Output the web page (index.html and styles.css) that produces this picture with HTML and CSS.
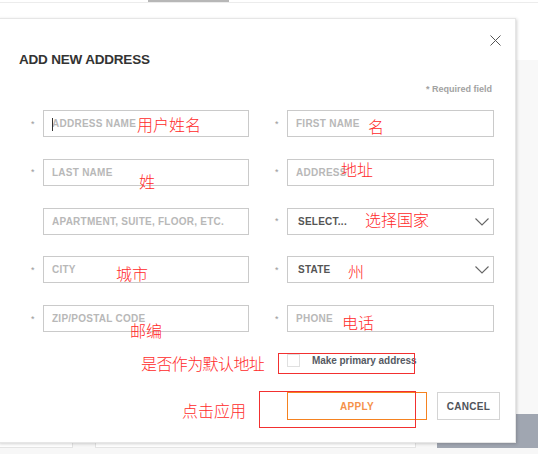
FILE: index.html
```html
<!DOCTYPE html>
<html lang="zh-CN">
<head>
<meta charset="utf-8">
<title>Add new address</title>
<link rel="stylesheet" href="styles.css">
</head>
<body>
<div class="page">
  <div class="tabs"><span class="tab-active"></span></div>
  <div class="spacer"></div>
  <div class="content"><div class="content-main"></div><div class="content-side"></div></div>
  <div class="grayrow"><div class="grayblock"></div></div>
  <div class="footer">
    <div class="fbox fbox-1"></div>
    <div class="fbox fbox-2"></div>
  </div>
</div>

<div class="modal">
  <button class="close" aria-label="close">
    <svg width="11" height="11" viewBox="0 0 11 11"><path d="M0.5 0.5 L10.5 10.5 M10.5 0.5 L0.5 10.5" stroke="#555" stroke-width="1" fill="none"/></svg>
  </button>
  <h2 class="title">ADD NEW ADDRESS</h2>
  <div class="required">* Required field</div>

  <div class="grid">
    <span class="star">*</span>
    <div class="field"><span class="caret"></span>ADDRESS NAME</div>
    <span class="star star-r">*</span>
    <div class="field">FIRST NAME</div>

    <span class="star">*</span>
    <div class="field">LAST NAME</div>
    <span class="star star-r">*</span>
    <div class="field">ADDRESS</div>

    <span class="star"></span>
    <div class="field">APARTMENT, SUITE, FLOOR, ETC.</div>
    <span class="star star-r">*</span>
    <div class="field select">SELECT...<svg class="chev" width="14" height="8" viewBox="0 0 14 8"><path d="M0.5 0.5 L7 7 L13.5 0.5" stroke="#666" stroke-width="1.1" fill="none"/></svg></div>

    <span class="star">*</span>
    <div class="field">CITY</div>
    <span class="star star-r">*</span>
    <div class="field select">STATE<svg class="chev" width="14" height="8" viewBox="0 0 14 8"><path d="M0.5 0.5 L7 7 L13.5 0.5" stroke="#666" stroke-width="1.1" fill="none"/></svg></div>

    <span class="star">*</span>
    <div class="field">ZIP/POSTAL CODE</div>
    <span class="star star-r">*</span>
    <div class="field">PHONE</div>
  </div>

  <div class="check-row">
    <span class="checkbox"></span>
    <span class="check-label">Make primary address</span>
  </div>

  <div class="btn-row">
    <button class="btn btn-apply">APPLY</button>
    <button class="btn btn-cancel">CANCEL</button>
  </div>

  <span class="note n1">用户姓名</span>
  <span class="note n2">名</span>
  <span class="note n3">姓</span>
  <span class="note n4">地址</span>
  <span class="note n5">选择国家</span>
  <span class="note n6">城市</span>
  <span class="note n7">州</span>
  <span class="note n8">邮编</span>
  <span class="note n9">电话</span>
  <span class="note n10">是否作为默认地址</span>
  <span class="note n11">点击应用</span>
  <span class="redbox rb1"></span>
  <span class="redbox rb2"></span>
</div>
</body>
</html>
```

FILE: styles.css
```css
* { box-sizing: border-box; }
html, body { margin: 0; padding: 0; }
body {
  width: 538px;
  height: 454px;
  overflow: hidden;
  position: relative;
  background: #fff;
  font-family: "Liberation Sans", Arial, sans-serif;
}

/* background page */
.page { display: flex; flex-direction: column; height: 454px; }
.tabs {
  height: 3px;
  border-bottom: 1px solid #ececec;
}
.tab-active {
  display: block;
  margin-left: 148px;
  width: 81px;
  height: 2px;
  background: #b7b7b7;
}
.spacer { height: 57px; }
.content { display: flex; height: 354px; }
.content-main { width: 516px; background: #fff; }
.content-side { flex: 1; background: #f8f8f8; }
.grayrow { height: 28px; display: flex; justify-content: flex-end; background: #f8f8f8; }
.grayblock { width: 101px; background: #a0a6b1; }
.footer {
  flex: 1;
  background: #f7f7f7;
  display: flex;
  align-items: flex-start;
  position: relative;
}
.fbox {
  height: 6px;
  background: #fff;
  border: 1px solid #e4e4e4;
  border-top: none;
}
.fbox-1 { width: 74px; margin-left: -1px; }
.fbox-2 { width: 321px; margin-left: 22px; }
.footer::after {
  content: "";
  position: absolute;
  right: 0;
  top: 0;
  width: 101px;
  height: 6px;
  background: #a0a6b1;
}

/* modal */
.modal {
  position: absolute;
  left: -2px;
  top: 18px;
  width: 518px;
  height: 425px;
  background: #fff;
  border: 1px solid #e6e6e6;
  box-shadow: 1px 1px 3px rgba(0,0,0,0.18);
  padding: 0 0 0 21px;
}
.close {
  position: absolute;
  right: 14px;
  top: 16px;
  padding: 0;
  border: none;
  background: none;
  width: 11px;
  height: 11px;
  line-height: 0;
}
.title {
  margin: 0;
  padding-top: 34px;
  font-size: 13.5px;
  font-weight: bold;
  color: #333;
  letter-spacing: -0.2px;
  line-height: 14px;
  margin-left: -1px;
}
.required {
  margin-top: 17px;
  margin-right: 23px;
  text-align: right;
  font-size: 9px;
  font-weight: bold;
  color: #a2a2a2;
  line-height: 10px;
}
.grid {
  margin-top: 16px;
  margin-left: 9px;
  display: grid;
  grid-template-columns: 14px 206px 38px 207px;
  grid-auto-rows: 27px;
  row-gap: 21.75px;
  align-items: center;
}
.star {
  font-size: 9px;
  color: #999;
  padding-left: 2px;
  line-height: 10px;
}
.star-r { padding-left: 26px; }
.field {
  height: 27px;
  border: 1px solid #cacaca;
  padding-left: 8px;
  display: flex;
  align-items: center;
  font-size: 10px;
  font-weight: bold;
  color: #b8b8b8;
  letter-spacing: 0.25px;
  position: relative;
}
.caret {
  position: absolute;
  left: 8px;
  top: 7px;
  width: 1px;
  height: 13px;
  background: #333;
}
.select { color: #555; padding-left: 10px; }
.chev { position: absolute; right: 4px; top: 9px; }

.check-row {
  margin-top: 22px;
  margin-left: 267px;
  display: flex;
  align-items: center;
  height: 13px;
}
.checkbox {
  width: 13px;
  height: 13px;
  border: 1px solid #e0e0e0;
  background: #fff;
}
.check-label {
  margin-left: 12px;
  font-size: 10px;
  font-weight: bold;
  color: #565a63;
  letter-spacing: -0.05px;
}
.btn-row {
  margin-top: 25px;
  margin-left: 267px;
  display: flex;
  gap: 10px;
}
.btn {
  height: 28px;
  background: #fff;
  font-family: "Liberation Sans", Arial, sans-serif;
  font-size: 10px;
  font-weight: bold;
  padding: 0;
  letter-spacing: 0.3px;
}
.btn-apply {
  width: 140px;
  border: 1px solid #f58220;
  color: #f5914a;
}
.btn-cancel {
  width: 63px;
  border: 1px solid #d4d4d4;
  color: #50535a;
}

/* red annotations overlaid on the screenshot */
.note {
  position: absolute;
  font-family: "Noto Sans CJK SC", sans-serif;
  font-size: 16px;
  font-weight: 300;
  line-height: 18px;
  color: #ff2a2a;
  white-space: nowrap;
}
.n1 { left: 138px; top: 96px; }
.n2 { left: 369px; top: 98px; }
.n3 { left: 140px; top: 153px; }
.n4 { left: 342px; top: 141px; }
.n5 { left: 366px; top: 191px; }
.n6 { left: 117px; top: 245px; }
.n7 { left: 349px; top: 243px; }
.n8 { left: 131px; top: 302px; }
.n9 { left: 343px; top: 294px; }
.n10 { left: 142px; top: 335px; letter-spacing: -0.6px; }
.n11 { left: 183px; top: 382px; }
.redbox {
  position: absolute;
  border: 1px solid #f23030;
}
.rb1 { left: 279px; top: 334px; width: 137px; height: 21px; }
.rb2 { left: 260px; top: 372px; width: 157px; height: 37px; }
```
